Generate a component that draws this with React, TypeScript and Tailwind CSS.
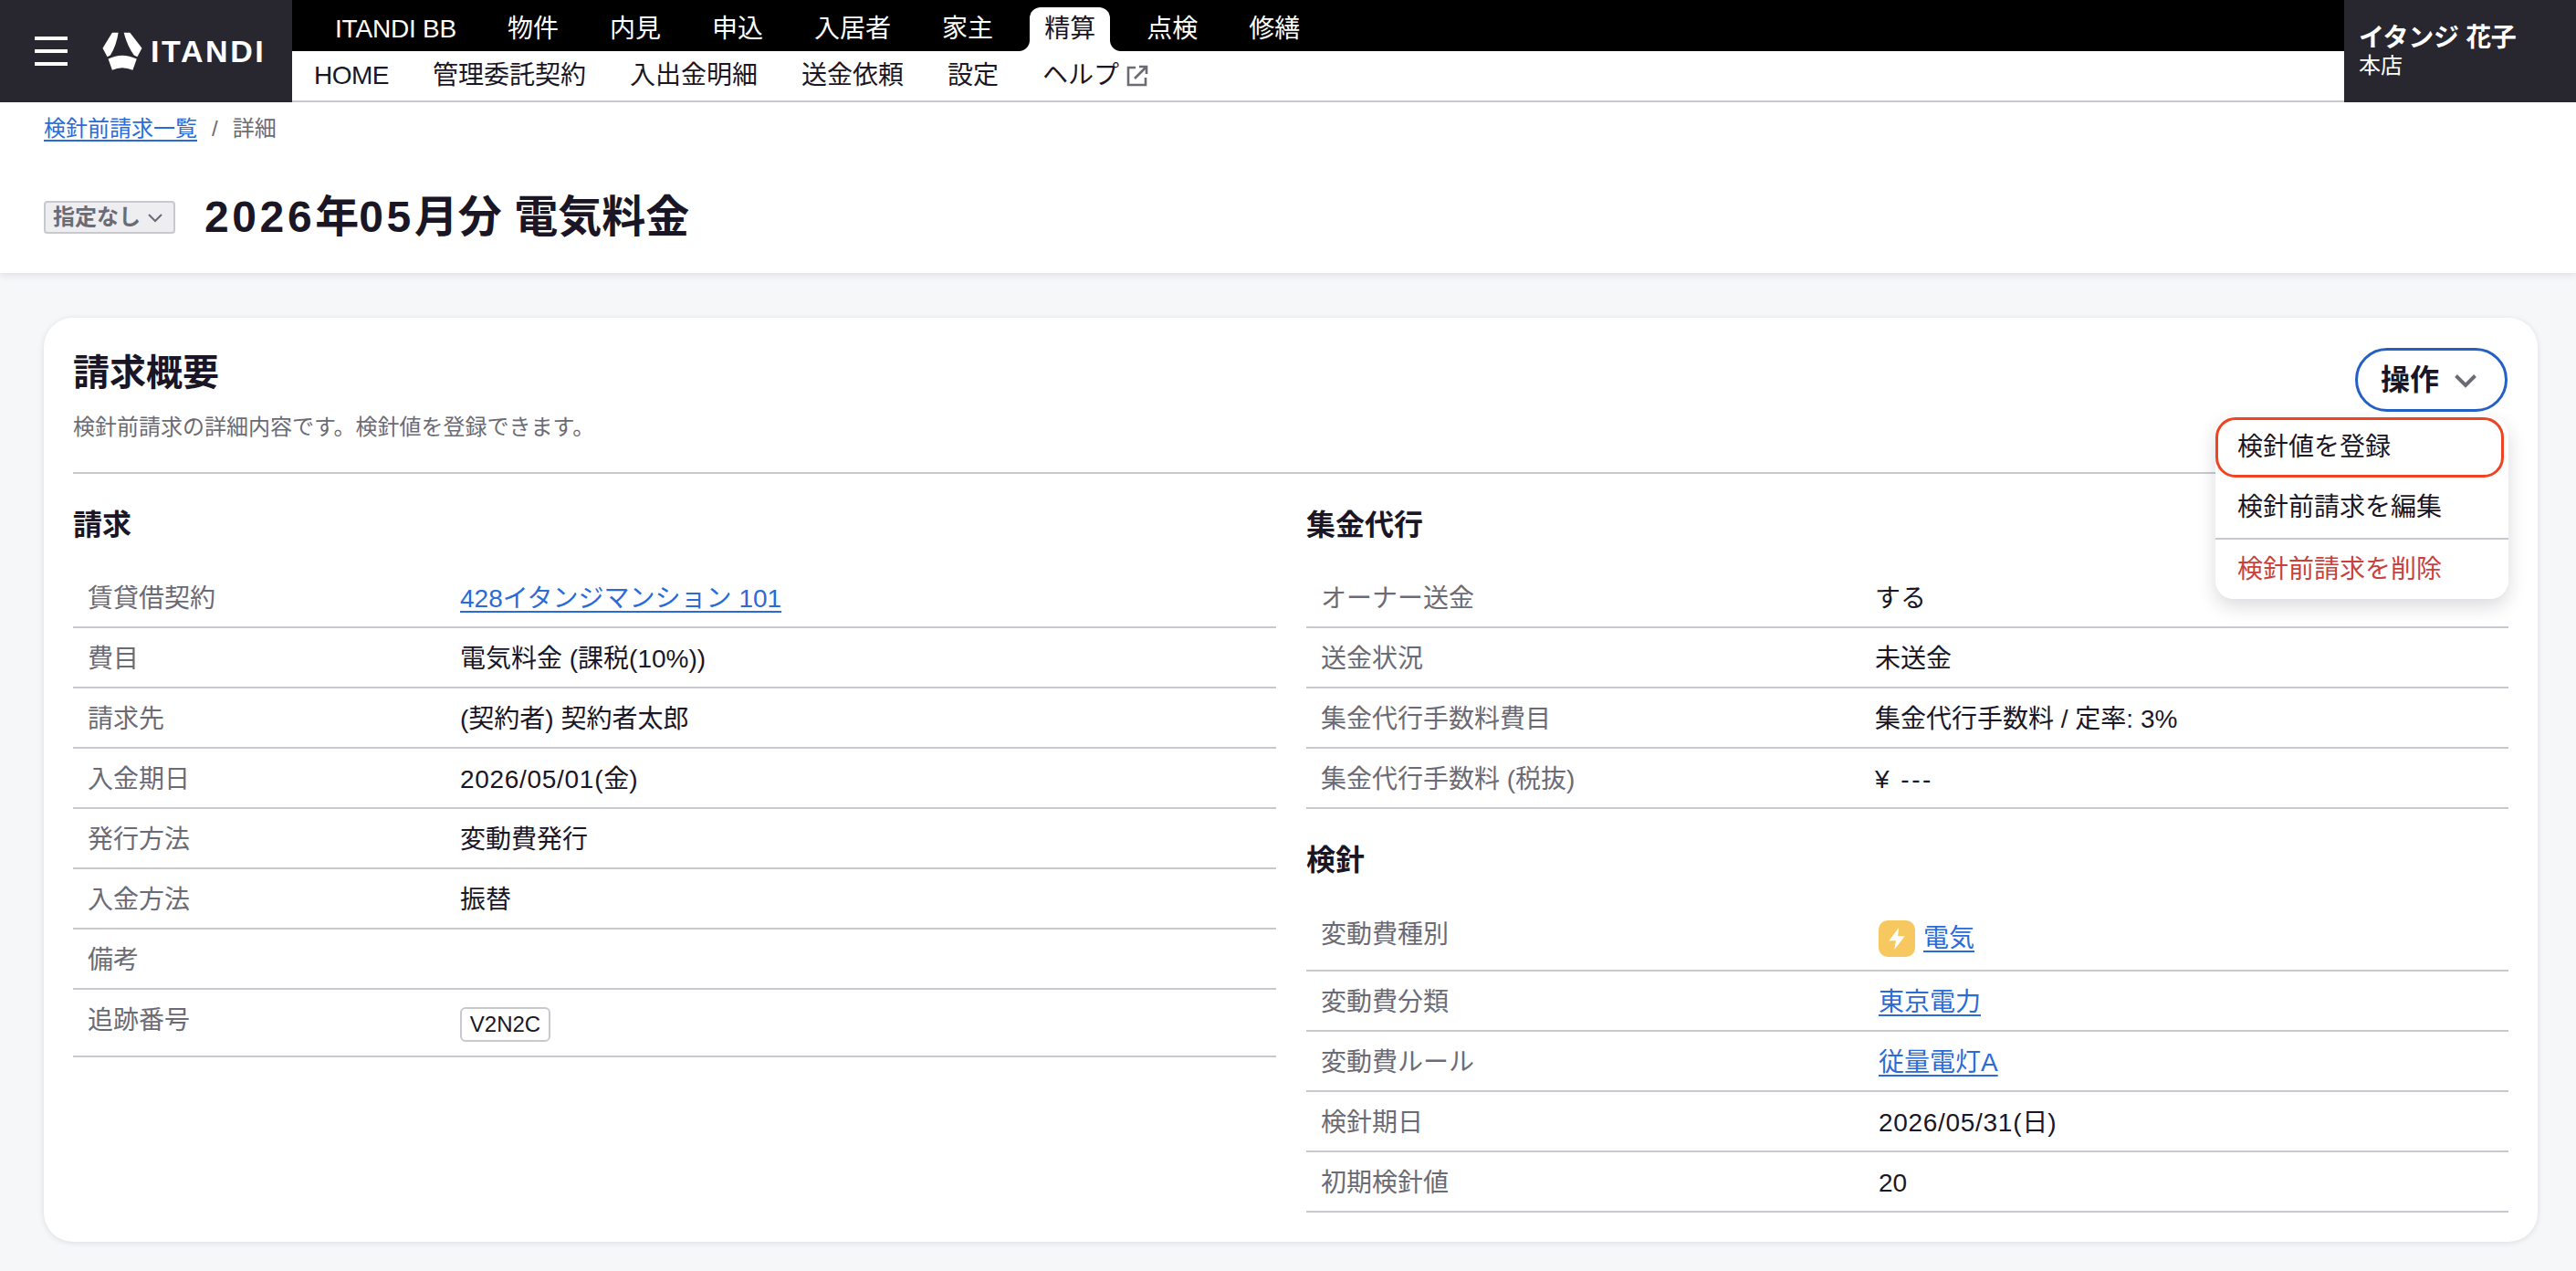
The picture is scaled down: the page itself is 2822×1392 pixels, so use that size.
import React from "react";

const LINE = "border-b-2 border-[#c8c8cf]";
const LINK = "text-[#2a6bd8] underline decoration-2 underline-offset-[4px]";

function Logo() {
  return (
    <svg width="44" height="42" viewBox="36 25 130 125" className="shrink-0" fill="#ffffff" aria-hidden="true">
      <path d="M68 27 L88 27 Q82 68 62 101 L52 106 L37 78 Z" />
      <path d="M106 27 L126 27 L165 78 L150 106 L139 101 Q116 68 106 27 Z" />
      <path d="M55 113 Q100 90 148 113 L135 149 Q100 134 68 149 Z" />
    </svg>
  );
}

function Row({ label, width, tall, children }: { label: string; width: string; tall?: boolean; children?: React.ReactNode }) {
  return (
    <div className={`flex items-start ${LINE} pb-[9px] pt-[13px] text-[28px] leading-[42px]`}>
      <div className={`${width} shrink-0 px-4 text-[#6b6b75]`}>{label}</div>
      <div className={`flex-1 px-4 text-[#1a1625] ${tall ? "h-[50px]" : "min-h-[42px]"}`}>{children}</div>
    </div>
  );
}

function Chevron({ size, stroke, color }: { size: number; stroke: number; color: string }) {
  return (
    <svg width={size} height={size} viewBox="0 0 24 24" fill="none" stroke={color} strokeWidth={stroke} aria-hidden="true">
      <path d="M5 9 L12 16 L19 9" />
    </svg>
  );
}

const topNav = ["物件", "内見", "申込", "入居者", "家主"];
const topNav2 = ["点検", "修繕"];
const subNav = ["管理委託契約", "入出金明細", "送金依頼", "設定"];

export default function App() {
  return (
    <div className="min-h-[1392px] bg-[#f6f7f9] font-['Liberation_Sans','Noto_Sans_CJK_JP',sans-serif] text-[#1a1625]">
      <div className="relative z-10 h-[299px] bg-white shadow-[0_2px_8px_rgba(30,30,50,0.12)]">
        <header className="flex h-[112px]">
          <div className="flex w-[320px] shrink-0 items-center bg-[#28262f] pl-[38px]">
            <div className="flex h-[32px] w-[36px] flex-col justify-between">
              <span className="h-[4px] bg-white" />
              <span className="h-[4px] bg-white" />
              <span className="h-[4px] bg-white" />
            </div>
            <div className="ml-[38px] flex items-center text-white">
              <Logo />
              <span className="ml-[9px] text-[34px] font-bold leading-none tracking-[2.6px]">ITANDI</span>
            </div>
          </div>
          <div className="flex min-w-0 flex-1 flex-col">
            <nav className="flex h-[56px] items-end gap-6 bg-black pl-[31px] text-[28px] leading-[48px] text-white">
              <span className="flex h-[48px] items-center px-4 tracking-[-0.2px]">ITANDI BB</span>
              {topNav.map((t) => (
                <span key={t} className="flex h-[48px] items-center px-4">{t}</span>
              ))}
              <span className="relative flex h-[48px] items-center rounded-t-[12px] bg-white px-4 text-[#1a1625]">
                精算
                <span className="absolute bottom-0 -left-[12px] h-[12px] w-[12px] bg-[radial-gradient(circle_at_0_0,#000_11.5px,#fff_12.5px)]" />
                <span className="absolute bottom-0 -right-[12px] h-[12px] w-[12px] bg-[radial-gradient(circle_at_100%_0,#000_11.5px,#fff_12.5px)]" />
              </span>
              {topNav2.map((t) => (
                <span key={t} className="flex h-[48px] items-center px-4">{t}</span>
              ))}
            </nav>
            <nav className="flex h-[56px] items-center gap-12 border-b-2 border-[#c8c8cf] bg-white pl-[24px] text-[28px] text-[#1a1625]">
              <span className="tracking-[-0.5px]">HOME</span>
              {subNav.map((t) => (
                <span key={t}>{t}</span>
              ))}
              <span className="flex items-center gap-2">
                ヘルプ
                <svg width="24" height="24" viewBox="0 0 24 24" fill="none" stroke="#6b6b75" strokeWidth="2.6" aria-hidden="true">
                  <path d="M10 3 H2 V22 H21 V14" />
                  <path d="M9 15 L22 2" />
                  <path d="M14 2 H22 V10" />
                </svg>
              </span>
            </nav>
          </div>
          <div className="flex w-[254px] shrink-0 flex-col justify-center bg-[#28262f] pl-[16px] text-white">
            <div className="text-[28px] font-bold leading-[32px] tracking-[-0.3px]">イタンジ 花子</div>
            <div className="text-[24px] leading-[28px]">本店</div>
          </div>
        </header>

        <div className="flex h-[58px] items-center pl-[48px] text-[24px] text-[#6b6b75]">
          <span className={LINK}>検針前請求一覧</span>
          <span className="ml-[16px] mr-[16px]">/</span>
          <span>詳細</span>
        </div>

        <div className="mt-[32px] flex items-center pl-[48px]">
          <div className="flex h-[36px] w-[144px] items-center gap-1 rounded-[4px] border-2 border-[#c8c8cf] bg-[#eeeef1] pl-[8px] text-[24px] font-bold leading-none text-[#6b6b75]">
            指定なし
            <Chevron size={24} stroke={2} color="#6b6b75" />
          </div>
          <h1 className="ml-[32px] text-[48px] font-bold leading-[72px]">
            <span className="tracking-[3.6px]">2026</span>年<span className="tracking-[3.6px]">05</span>月分 電気料金
          </h1>
        </div>
      </div>

      <main className="pb-[31px] pl-[48px] pr-[42px] pt-[49px]">
        <section className="rounded-[32px] bg-white px-[32px] pb-[32px] pt-[30px] shadow-[0_1px_6px_rgba(30,30,50,0.12)]">
          <div className={`relative flex items-start justify-between ${LINE} pb-[31px]`}>
            <div>
              <h2 className="text-[40px] font-bold leading-[60px]">請求概要</h2>
              <p className="mt-[12px] text-[24px] leading-[36px] text-[#6b6b75]">
                検針前請求の詳細内容です。検針値を登録できます。
              </p>
            </div>
            <button className="mr-[1px] mt-[3px] flex h-[70px] w-[167px] items-center justify-center gap-[11px] rounded-full border-[3px] border-[#2460c4] bg-white text-[32px] font-bold leading-none">
              操作
              <Chevron size={36} stroke={2.6} color="#6b6b75" />
            </button>
            <div className="absolute right-0 top-[79px] z-20 w-[321px] rounded-[20px] bg-white shadow-[0_8px_20px_rgba(30,30,50,0.16)]">
              <div className="mr-[5px] flex h-[66px] items-center rounded-[22px] border-[3px] border-[#ee4424] pl-[21px] text-[28px]">
                検針値を登録
              </div>
              <div className="flex h-[66px] items-center pl-[24px] text-[28px]">検針前請求を編集</div>
              <div className="h-[2px] bg-[#c8c8cf]" />
              <div className="flex h-[65px] items-center pl-[24px] text-[28px] text-[#c8413c]">検針前請求を削除</div>
            </div>
          </div>

          <div className="mt-[32px] flex gap-[33px]">
            <div className="w-[1318px] shrink-0">
              <h3 className="mb-[23px] text-[32px] font-bold leading-[48px]">請求</h3>
              <Row label="賃貸借契約" width="w-[408px]"><span className={LINK}>428イタンジマンション 101</span></Row>
              <Row label="費目" width="w-[408px]">電気料金 (課税(10%))</Row>
              <Row label="請求先" width="w-[408px]">(契約者) 契約者太郎</Row>
              <Row label="入金期日" width="w-[408px]"><span className="tracking-[0.7px]">2026/05/01(</span>金)</Row>
              <Row label="発行方法" width="w-[408px]">変動費発行</Row>
              <Row label="入金方法" width="w-[408px]">振替</Row>
              <Row label="備考" width="w-[408px]" />
              <Row label="追跡番号" width="w-[408px]" tall>
                <span className="mt-[6px] inline-flex h-[38px] w-[99px] items-center justify-center rounded-[6px] border-2 border-[#c8c8cf] text-[24px] leading-none">
                  V2N2C
                </span>
              </Row>
            </div>
            <div className="min-w-0 flex-1">
              <h3 className="mb-[23px] text-[32px] font-bold leading-[48px]">集金代行</h3>
              <Row label="オーナー送金" width="w-[607px]">する</Row>
              <Row label="送金状況" width="w-[607px]">未送金</Row>
              <Row label="集金代行手数料費目" width="w-[607px]">集金代行手数料 / 定率: 3%</Row>
              <Row label="集金代行手数料 (税抜)" width="w-[607px]"><span className="tracking-[2.5px]">¥ ---</span></Row>
              <h3 className="mb-[24px] mt-[32px] text-[32px] font-bold leading-[48px]">検針</h3>
              <Row label="変動費種別" width="w-[611px]" tall>
                <span className="flex h-[50px] items-center gap-[9px]">
                  <span className="flex h-[40px] w-[40px] items-center justify-center rounded-[10px] bg-[#f6c85f]">
                    <svg width="26" height="26" viewBox="0 0 24 24" fill="#ffffff" aria-hidden="true">
                      <path d="M14 1 L4 14 H11 L9.5 23 L20 9.5 H13 Z" />
                    </svg>
                  </span>
                  <span className={LINK}>電気</span>
                </span>
              </Row>
              <Row label="変動費分類" width="w-[611px]"><span className={LINK}>東京電力</span></Row>
              <Row label="変動費ルール" width="w-[611px]"><span className={LINK}>従量電灯A</span></Row>
              <Row label="検針期日" width="w-[611px]"><span className="tracking-[0.7px]">2026/05/31(</span>日)</Row>
              <Row label="初期検針値" width="w-[611px]">20</Row>
            </div>
          </div>
        </section>
      </main>
    </div>
  );
}
